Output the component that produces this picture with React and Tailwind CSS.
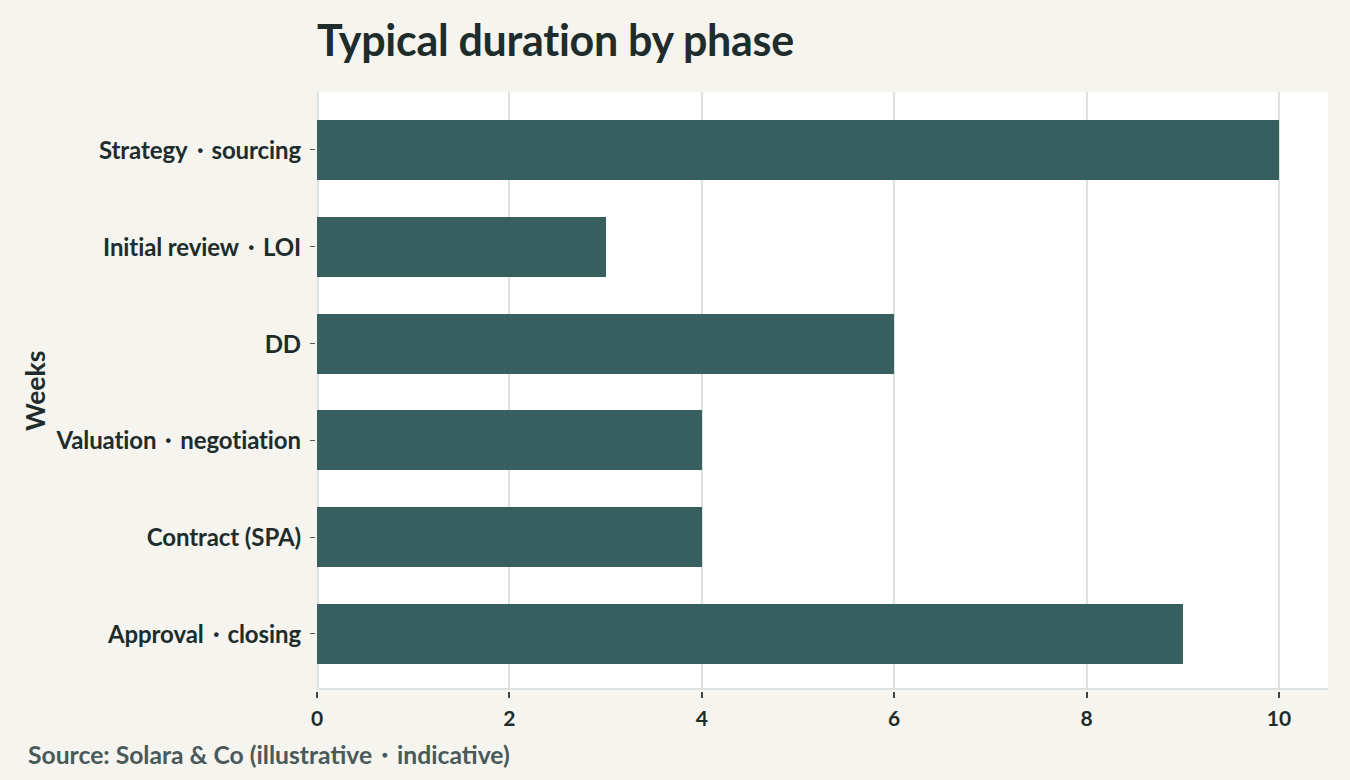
import React from "react";

const PHASES = [
  { label: "Strategy・sourcing", weeks: 10 },
  { label: "Initial review・LOI", weeks: 3 },
  { label: "DD", weeks: 6 },
  { label: "Valuation・negotiation", weeks: 4 },
  { label: "Contract (SPA)", weeks: 4 },
  { label: "Approval・closing", weeks: 9 },
];

const TICKS = [0, 2, 4, 6, 8, 10];
// x scale: 0..10 weeks spans 962px of a 1011px plot
const PX_PER_WEEK = 96.2;

export default function App() {
  return (
    <div
      className="w-[1350px] h-[780px] bg-[#f5f4ef] text-[#1f2c2c] overflow-hidden"
      style={{ fontFamily: "Lato, 'Noto Sans', sans-serif" }}
    >
      <h1 className="pl-[317px] pt-[13px] h-[92px] text-[43px] font-bold leading-[54px] tracking-[-0.3px]">
        Typical duration by phase
      </h1>

      <div className="flex h-[598px]">
        {/* y axis title */}
        <div className="w-[72px] flex items-center justify-center">
          <span className="-rotate-90 text-[26.5px] font-bold whitespace-nowrap">Weeks</span>
        </div>

        {/* category labels */}
        <div className="w-[245px] flex flex-col pt-[9.6px]">
          {PHASES.map((p) => (
            <div key={p.label} className="h-[96.8px] shrink-0 flex items-center justify-end">
              <span className="text-[24px] font-bold whitespace-nowrap tracking-[-0.1px]">{p.label}</span>
              <span className="ml-[9px] mr-[2px] w-[5px] h-px bg-[#555] shrink-0" />
            </div>
          ))}
        </div>

        {/* plot */}
        <div className="relative w-[1011px] bg-white border-l-2 border-b-2 border-[#dce2e2]">
          {TICKS.slice(1).map((t) => (
            <div
              key={t}
              className="absolute top-0 bottom-0 w-[2px] bg-[#dce2e2]"
              style={{ left: t * PX_PER_WEEK - 3 }}
            />
          ))}
          <div className="relative flex flex-col pt-[9.6px]">
            {PHASES.map((p) => (
              <div key={p.label} className="h-[96.8px] shrink-0 flex items-center">
                <div className="h-[60px] bg-[#385f5f] -ml-[2px]" style={{ width: p.weeks * PX_PER_WEEK }} />
              </div>
            ))}
          </div>
        </div>
      </div>

      {/* x axis */}
      <div className="relative ml-[317px] h-[48px]">
        {TICKS.map((t) => (
          <div key={t} className="absolute top-0 flex flex-col items-center w-[40px]" style={{ left: t * PX_PER_WEEK - 20 }}>
            <span className="w-[2px] h-[6px] bg-[#3d4747] mt-[2px]" />
            <span className="text-[21px] font-bold leading-[24px] mt-[8px]">{t}</span>
          </div>
        ))}
      </div>

      <p className="pl-[28px] text-[24.7px] font-bold text-[#4a5959] leading-[30px] mt-[2px]">
        Source: Solara &amp; Co (illustrative・indicative)
      </p>
    </div>
  );
}
